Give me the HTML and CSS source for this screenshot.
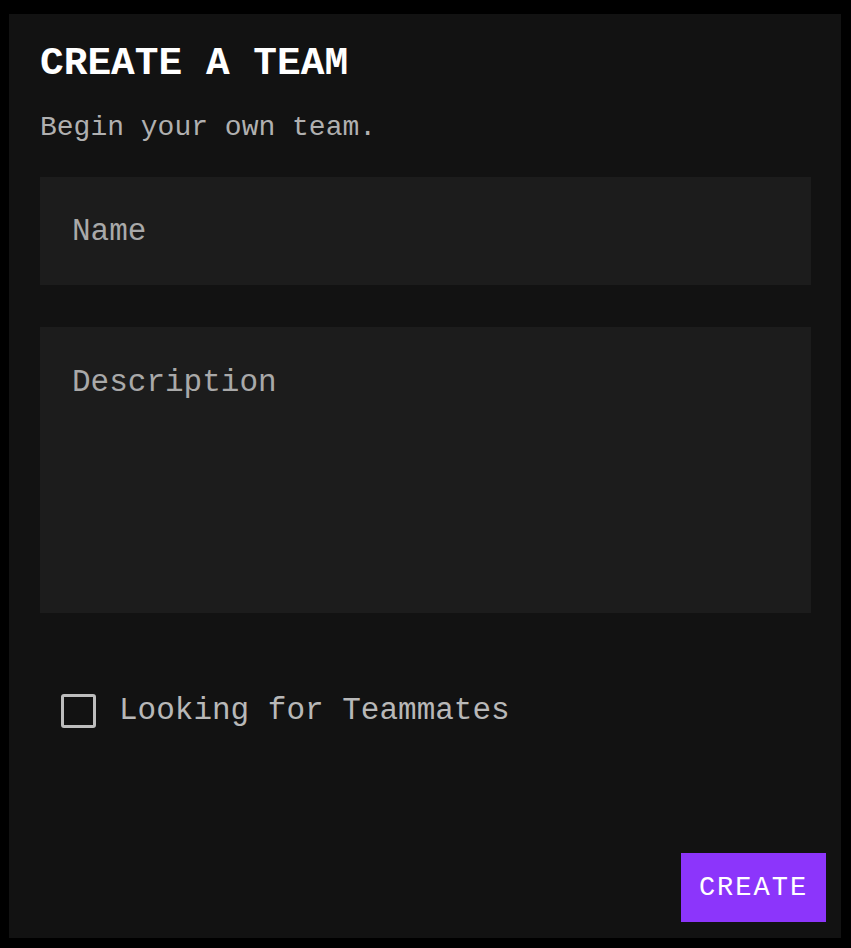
FILE: index.html
```html
<!DOCTYPE html>
<html lang="en">
<head>
<meta charset="utf-8">
<title>Create a Team</title>
<link rel="stylesheet" href="styles.css">
</head>
<body>
<form class="card">
  <h1 class="title">CREATE A TEAM</h1>
  <p class="subtitle">Begin your own team.</p>
  <input class="field field-name" type="text" placeholder="Name">
  <textarea class="field field-desc" placeholder="Description"></textarea>
  <label class="check-row">
    <span class="check-box"></span>
    <span class="check-label">Looking for Teammates</span>
  </label>
  <div class="footer">
    <button class="create-btn" type="button">CREATE</button>
  </div>
</form>
</body>
</html>
```
FILE: styles.css
```css
html, body {
  margin: 0;
  padding: 0;
  background: #000;
}
body {
  font-family: "Liberation Mono", "DejaVu Sans Mono", monospace;
}
.card {
  box-sizing: border-box;
  margin: 14px 0 0 9px;
  width: 832px;
  height: 924px;
  background: #121212;
  padding: 26px 30px 16px 31px;
  display: flex;
  flex-direction: column;
}
.title {
  margin: 0;
  font-size: 39.5px;
  line-height: 48px;
  font-weight: 700;
  color: #fff;
}
.subtitle {
  margin: 22px 0 0;
  font-size: 28px;
  line-height: 36px;
  color: #b0b0b0;
}
.field {
  box-sizing: border-box;
  display: block;
  width: 771px;
  border: none;
  outline: none;
  background: #1c1c1c;
  color: #ddd;
  font-family: inherit;
  font-size: 31px;
  line-height: 36px;
  margin: 0;
  resize: none;
}
.field::placeholder {
  color: #a9a9a9;
  opacity: 1;
}
.field-name {
  margin-top: 31px;
  height: 108px;
  padding: 36px 32px 36px;
}
.field-desc {
  margin-top: 42px;
  height: 286px;
  padding: 38px 32px;
}
.check-row {
  display: flex;
  align-items: center;
  margin: 80px 0 0 21px;
  gap: 23px;
}
.check-box {
  box-sizing: border-box;
  width: 35px;
  height: 34px;
  border: 3.5px solid #bdbdbd;
  border-radius: 3px;
}
.check-label {
  font-size: 31px;
  line-height: 36px;
  color: #b8b8b8;
}
.footer {
  margin-top: auto;
  display: flex;
  justify-content: flex-end;
  margin-right: -15px;
}
.create-btn {
  width: 145px;
  height: 69px;
  border: none;
  background: #8c35fb;
  color: #fff;
  font-family: inherit;
  font-size: 27px;
  letter-spacing: 2px;
  padding: 0;
}
```
